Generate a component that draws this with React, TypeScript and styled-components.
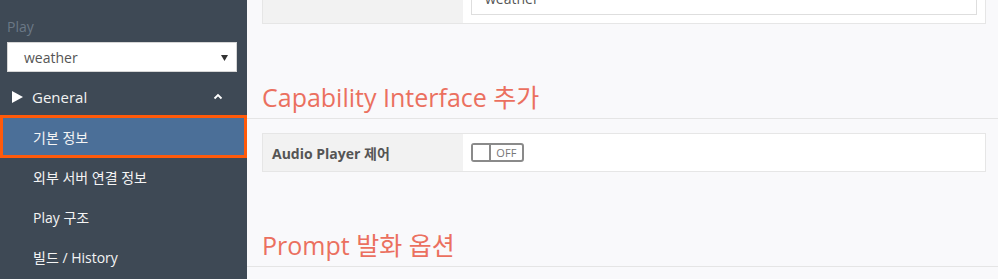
import styled, { createGlobalStyle } from "styled-components";

const GlobalStyle = createGlobalStyle`
  html, body {
    margin: 0;
    padding: 0;
    background: #f9f9fb;
    overflow: hidden;
  }
  body {
    font-family: "Open Sans", "Noto Sans CJK KR", sans-serif;
  }
`;

const Layout = styled.div`
  display: flex;
  width: 998px;
  height: 279px;
  overflow: hidden;
`;

const Sidebar = styled.aside`
  width: 247px;
  flex-shrink: 0;
  background: #3e4955;
  padding-top: 17px;
  box-sizing: border-box;
`;

const SideLabel = styled.div`
  color: #6b7886;
  font-size: 14px;
  line-height: 20px;
  padding-left: 7px;
  margin-bottom: 5px;
`;

const SelectBox = styled.div`
  margin: 0 10px 0 7px;
  height: 30px;
  background: #fff;
  border: 1px solid #d6d6d6;
  box-sizing: border-box;
  display: flex;
  align-items: center;
  justify-content: space-between;
  padding: 0 8px 0 16px;
  color: #555;
  font-size: 14px;
`;

const GroupRow = styled.div`
  margin-top: 8px;
  height: 33px;
  padding-bottom: 2px;
  display: flex;
  align-items: center;
  padding: 0 24px 2px 12px;
  color: #f2f2f2;
  font-size: 15px;
  gap: 9px;
`;

const GroupTitle = styled.span`
  flex: 1;
`;

const NavItem = styled.div<{ $active?: boolean }>`
  height: ${(p) => (p.$active ? "43px" : "40px")};
  box-sizing: border-box;
  display: flex;
  align-items: center;
  padding-left: ${(p) => (p.$active ? "30px" : "33px")};
  padding-bottom: ${(p) => (p.$active ? "0" : "3px")};
  color: #f4f4f4;
  font-size: 14px;
  background: ${(p) => (p.$active ? "#4b6f98" : "transparent")};
  border: ${(p) => (p.$active ? "3px solid #ff5a0a" : "none")};
`;

const Main = styled.main`
  flex: 1;
  padding: 0 12px 0 15px;
  margin-top: -28px;
`;

const FormRow = styled.div`
  display: flex;
  border: 1px solid #e6e6e6;
  background: #fff;
`;

const LabelCell = styled.div`
  width: 200px;
  flex-shrink: 0;
  background: #f2f2f2;
  display: flex;
  align-items: center;
  padding-left: 9px;
  box-sizing: border-box;
  color: #555;
  font-size: 14px;
  font-weight: 700;
`;

const ValueCell = styled.div`
  flex: 1;
  padding: 8px;
`;

const TextInput = styled.div`
  height: 34px;
  border: 1px solid #dedede;
  box-sizing: border-box;
  display: flex;
  align-items: center;
  padding-left: 13px;
  color: #555;
  font-size: 14px;
`;

const SectionTitle = styled.h2`
  margin: 58px -12px 14px -15px;
  padding: 0 12px 6px 15px;
  border-bottom: 1px solid #e5e5e5;
  font-size: 25px;
  font-weight: 400;
  line-height: 30px;
  color: #eb705f;
`;

const Toggle = styled.div`
  width: 53px;
  height: 19px;
  border: 2px solid #8a8a8a;
  border-radius: 3px;
  box-sizing: border-box;
  display: flex;
  margin: 1px 0;
`;

const Knob = styled.span`
  width: 16px;
  border-right: 2px solid #8a8a8a;
  background: #fff;
`;

const ToggleText = styled.span`
  flex: 1;
  display: flex;
  align-items: center;
  justify-content: center;
  font-size: 11px;
  color: #777;
  letter-spacing: 0.2px;
`;

export default function App() {
  const items = ["기본 정보", "외부 서버 연결 정보", "Play 구조", "빌드 / History"];
  return (
    <>
      <GlobalStyle />
      <Layout>
        <Sidebar>
          <SideLabel>Play</SideLabel>
          <SelectBox>
            weather
            <svg width="7" height="7" viewBox="0 0 7 7">
              <path d="M0 1 L7 1 L3.5 7 Z" fill="#333" />
            </svg>
          </SelectBox>
          <GroupRow>
            <svg width="11" height="12" viewBox="0 0 11 12">
              <path d="M0 0 L11 6 L0 12 Z" fill="#fff" />
            </svg>
            <GroupTitle>General</GroupTitle>
            <svg width="10" height="7" viewBox="0 0 10 7">
              <path d="M1.5 5.5 L5 2 L8.5 5.5" stroke="#fff" strokeWidth="1.8" fill="none" />
            </svg>
          </GroupRow>
          {items.map((it, i) => (
            <NavItem key={it} $active={i === 0}>
              {it}
            </NavItem>
          ))}
        </Sidebar>
        <Main>
          <FormRow>
            <LabelCell />
            <ValueCell>
              <TextInput>weather</TextInput>
            </ValueCell>
          </FormRow>
          <SectionTitle>Capability Interface 추가</SectionTitle>
          <FormRow>
            <LabelCell>Audio Player 제어</LabelCell>
            <ValueCell>
              <Toggle>
                <Knob />
                <ToggleText>OFF</ToggleText>
              </Toggle>
            </ValueCell>
          </FormRow>
          <SectionTitle>Prompt 발화 옵션</SectionTitle>
          <FormRow>
            <LabelCell>&nbsp;</LabelCell>
            <ValueCell>
              <TextInput />
            </ValueCell>
          </FormRow>
        </Main>
      </Layout>
    </>
  );
}
